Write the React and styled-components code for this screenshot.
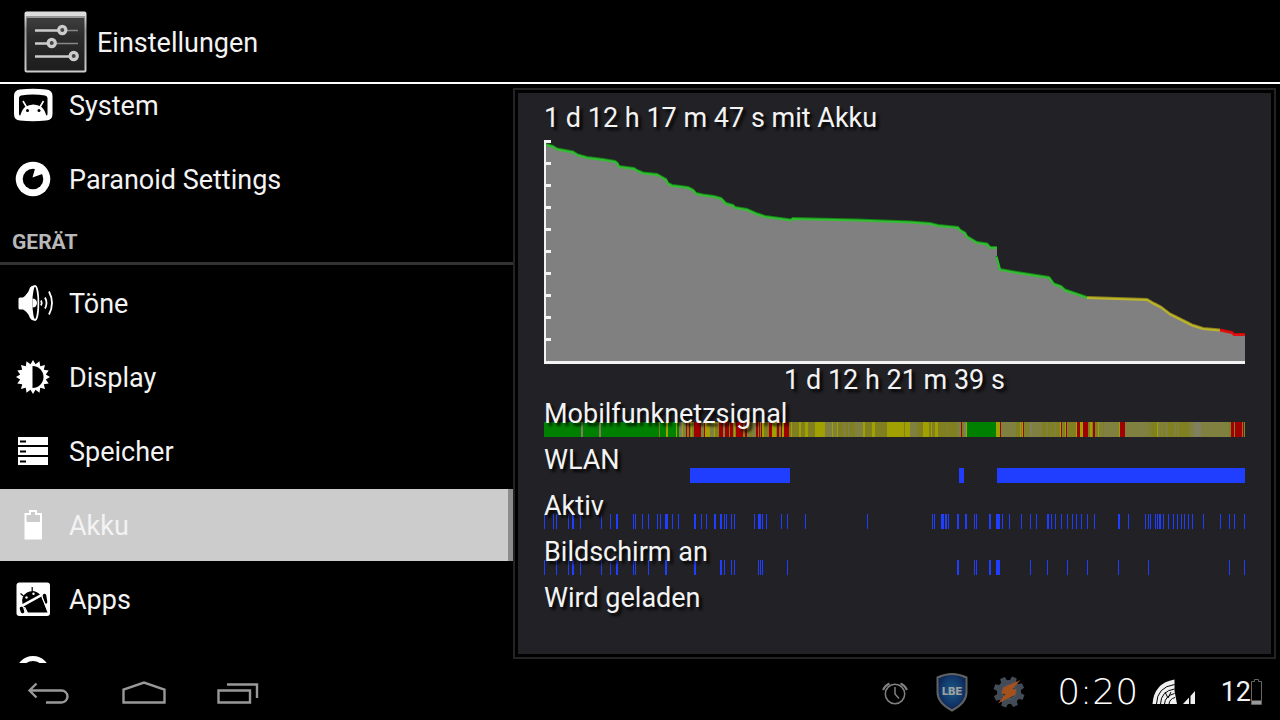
import React from 'react'
import styled, { createGlobalStyle } from 'styled-components'

const GlobalStyle = createGlobalStyle`
  * {
    box-sizing: border-box;
  }

  body {
    background: #000;
    color: #f3f3f3;
    font-family: Roboto, 'Noto Sans', sans-serif;
    font-size: 27px;
    line-height: 32px;
    margin: 0;
  }

  svg {
    display: block;
    flex-shrink: 0;
  }
`

const Page = styled.div`
  display: flex;
  flex-direction: column;
  height: 100vh;
  overflow: hidden;
`

const Header = styled.header`
  align-items: center;
  border-bottom: 2px solid #fff;
  display: flex;
  flex-shrink: 0;
  gap: 9px;
  height: 84px;
  padding: 2px 24px 0;
`

const Title = styled.h1`
  font-size: 27px;
  font-weight: 400;
  margin: 0;
  padding-top: 2px;
`

const Main = styled.main`
  display: flex;
  flex: 1;
  min-height: 0;
`

const Sidebar = styled.nav`
  flex: 0 0 calc(40% + 1px);
  overflow: hidden;
`

/* the list is scrolled a little, the first row slides under the header */
const List = styled.div`
  display: flex;
  flex-direction: column;
  gap: 2px;
  margin-top: -15px;
`

const Row = styled.button`
  align-items: center;
  background: ${props => (props.$selected ? '#ccc' : 'transparent')};
  border: 0;
  border-right: 5px solid ${props => (props.$selected ? '#8c8c8c' : 'transparent')};
  color: inherit;
  display: flex;
  flex-shrink: 0;
  font: inherit;
  gap: 12px;
  height: 72px;
  padding: 0 9px;
  text-align: left;
`

const RowLabel = styled.span`
  padding-top: 2px;
`

const Category = styled.h2`
  border-bottom: 3px solid #333;
  color: #b8b8b8;
  font-size: 21px;
  font-weight: 700;
  height: 48px;
  line-height: 50px;
  margin: 0;
  padding: 0 12px;
`

const Frame = styled.section`
  border: 2px solid #242424;
  display: flex;
  flex: 1;
  margin: 4px 4px 4px 0;
  min-width: 0;
  padding: 3px;
`

const Panel = styled.div`
  background: #222226;
  flex: 1;
  min-width: 0;
  padding: 9px 26px;
  text-shadow: 3px 3px 3px rgba(0, 0, 0, 0.9);
`

const PanelTitle = styled.h2`
  font-size: 27px;
  font-weight: 400;
  margin: 0 0 6px;
`

const ChartSvg = styled.svg`
  height: 224px;
  width: 100%;
`

const Duration = styled.div`
  margin-bottom: 2px;
  text-align: center;
`

const TimelineRow = styled.div`
  display: grid;
  grid-template-columns: minmax(0, 1fr);
  height: 46px;
  padding-bottom: 7px;
`

const TimelineLabel = styled.span`
  grid-area: 1 / 1;
  z-index: 1;
`

const TimelineSvg = styled.svg`
  align-self: end;
  grid-area: 1 / 1;
  height: 15px;
  width: 100%;
`

const SystemBar = styled.footer`
  align-items: center;
  display: flex;
  flex-shrink: 0;
  height: 57px;
  justify-content: space-between;
  padding: 0 18px 0 24px;
`

const NavKeys = styled.div`
  display: flex;
  gap: 47px;
`

const NavKey = styled.button`
  background: none;
  border: 0;
  padding: 0;
`

const Status = styled.div`
  align-items: center;
  display: flex;
  gap: 25px;
`

const StatusGroup = styled.div`
  align-items: center;
  display: flex;
  gap: ${props => props.$gap || 0}px;
`

const Clock = styled.time`
  color: #fff;
  font-family: 'DejaVu Sans', sans-serif;
  font-size: 36px;
  font-weight: 200;
  min-width: 96px;
  text-align: center;
`

const sunPoints = Array.from({ length: 32 }, (_, i) => {
  const r = i % 2 ? 13 : 17
  const a = (i * Math.PI) / 16 - Math.PI / 2
  return `${(24 + r * Math.cos(a)).toFixed(1)},${(24 + r * Math.sin(a)).toFixed(1)}`
}).join(' ')

const icons = {
  system: (
    <>
      <path fill="#fff" d="M11 8.5Q24 7 37 8.5Q43.500 9 43.500 15V33Q43.500 39 37 39.500Q24 41 11 39.500Q5 39 5 33V15Q5 9 11 8.500Z" />
      <path fill="#000" d="M12 14.500Q24 12.500 36 14.500Q38.500 15 38.500 17V33Q38.500 34.500 37 34.500H11.500Q10 34.500 10 33V17Q10 15 12 14.500Z" />
      <path fill="#fff" d="M11 36Q12.500 29 16 26Q20 23.500 24.300 23.500Q29 23.500 32.500 26Q36 29 37.700 36Z" />
      <path stroke="#fff" strokeWidth="1.6" d="M17.500 26L14 20M31 26L34.500 20" />
      <circle cx="18.500" cy="29.500" r="1.500" />
      <circle cx="30" cy="29.500" r="1.500" />
    </>
  ),
  paranoid: (
    <>
      <circle cx="24" cy="24" r="17.300" fill="#fff" />
      <circle cx="24" cy="24" r="10.300" />
      <path fill="#fff" d="M23.500 22.500L26.500 12L34 12L36 18Z" />
    </>
  ),
  sound: (
    <>
      <path fill="#fff" d="M11 18.500H14Q19 15 21 8.500Q22.500 6.500 25 6.500H27V41.500H25Q22.500 41.500 21 39Q19 33 14 30.500H11Q9.500 30.500 9.500 29V20Q9.500 18.500 11 18.500Z" />
      <ellipse cx="26" cy="24" rx="3.400" ry="17" stroke="#fff" strokeWidth="1.600" />
      <path fill="#fff" d="M23.500 19.500A4.500 4.500 0 0 1 23.500 28.500Z" />
      <path fill="none" stroke="#fff" strokeWidth="1.800" d="M32 21.500Q33.500 24 32 26.500M36 18.500Q39 24 36 29.500M40 12.500Q46 24 40 35.500" />
    </>
  ),
  display: (
    <>
      <polygon fill="#fff" points={sunPoints} />
      <path d="M23.500 13A11 11 0 0 1 23.500 35Z" />
    </>
  ),
  storage: (
    <>
      <path fill="#fff" d="M9 10H39V18H9ZM9 20H39V28H9ZM9 30H39V38H9Z" />
      <path d="M11 13.500H17V15.500H11ZM11 23.500H17V25.500H11ZM11 33.500H17V35.500H11Z" />
    </>
  ),
  battery: (
    <path
      fill="#fff"
      fillRule="evenodd"
      d="M20 9H28V12H33V38.500H15.500V12H20ZM22 11V14H17.500V21H31V14H26V11Z"
    />
  ),
  apps: (
    <>
      <rect x="7.500" y="7.500" width="33.500" height="33.500" rx="3" fill="#fff" />
      <path d="M13.500 29Q11.500 21.500 18 17.500Q25 13.500 31 19.500ZM14.500 31.500L32.500 21.500L38.500 37.500H18Z" />
      <path fill="none" stroke="#000" strokeWidth="1.200" d="M23.200 16V12M14.500 21L11.500 18.500" />
      <path stroke="#000" strokeWidth="3.600" strokeLinecap="round" d="M35.500 20.500L36.500 27M12.500 33.500L13.500 36.500" />
      <path stroke="#fff" strokeWidth="1.200" d="M33 22L39 36M15.500 32L18.500 38" />
      <circle cx="17.500" cy="22.500" r="1.200" fill="#fff" />
      <circle cx="24.500" cy="18.800" r="1.200" fill="#fff" />
    </>
  ),
  advanced: <circle cx="24" cy="24" r="14.500" stroke="#fff" strokeWidth="5" />,
}

const Icon = ({ name }) => (
  <svg width="48" height="48" viewBox="0 0 48 48" aria-hidden="true">
    {icons[name]}
  </svg>
)

const SettingsIcon = () => (
  <svg width="64" height="62" viewBox="0 0 64 62" aria-hidden="true">
    <defs>
      <linearGradient id="plate" x1="0" y1="0" x2="0" y2="1">
        <stop offset="0" stopColor="#444" />
        <stop offset="0.4" stopColor="#2c2c2c" />
        <stop offset="1" stopColor="#1c1c1c" />
      </linearGradient>
      <linearGradient id="rim" x1="0" y1="0" x2="0" y2="1">
        <stop offset="0" stopColor="#e6e6e6" />
        <stop offset="0.3" stopColor="#999" />
        <stop offset="1" stopColor="#ccc" />
      </linearGradient>
    </defs>
    <rect x="1.500" y="1.500" width="60" height="59" rx="1" fill="url(#plate)" stroke="url(#rim)" strokeWidth="2" />
    <path stroke="#ddd" strokeWidth="4" d="M1 3H62" />
    <path stroke="#999" strokeWidth="2" d="M2 6H61" />
    <path stroke="#ccc" strokeWidth="2.600" d="M11 19.500H36M11 32.500H25M11 45.500H47" />
    <path stroke="#888" strokeWidth="1.400" d="M40 19.500H54M30 32.500H54" />
    <g fill="#444" stroke="#ccc" strokeWidth="3.200">
      <circle cx="38.300" cy="19" r="3.600" />
      <circle cx="27.700" cy="32" r="3.600" />
      <circle cx="49.700" cy="45" r="3.600" />
    </g>
  </svg>
)

const greenLine =
  '2,5 9,7 13,9.5 29,12.500 34,15.500 43,18 59,20 71,22 73.500,24 75,27 90,29 93,31 99,33.500 113,35 122,40 124,44 128,46 144,48 149,50.500 152,54 159,55.500 170,57 177,59 182,64 189,66 191,68 203,70 212,74 221,77 247.500,80.500 248.500,79 313,80.500 366,82.500 386,84 394,86 414,88 416,90.500 421,93.500 423,97 433,103 443,104.500 446,108 453,108'
const greenLine2 = '452.500,117 456,130 473,133 505,138 510,144.500 517,147 521,150.500 533,154.500 543,158'
const yellowLine = '543,158 603,160 610,164 617,167.500 626,174.500 648,185.500 659,189 676,190.500'
const redLine = '676,190.500 688,193 690,195 701,195'

const levels = [
  { points: greenLine, color: '#35bb35', shade: '#128a12' },
  { points: greenLine2, color: '#35bb35', shade: '#128a12' },
  { points: yellowLine, color: '#bcb42c', shade: '#8c8418' },
  { points: redLine, color: '#e01010', shade: '#c00808' },
]

const BatteryChart = () => (
  <ChartSvg viewBox="0 0 701 224" preserveAspectRatio="none" role="img" aria-label="Akkuverlauf">
    <polygon fill="#808080" points={`2,222 ${greenLine} 453,117 ${greenLine2} ${yellowLine} ${redLine} 701,222`} />
    {levels.map(({ points, color, shade }) => (
      <g key={points} fill="none" strokeWidth="2">
        <polyline points={points} stroke={shade} transform="translate(0 -1)" />
        <polyline points={points} stroke={color} />
      </g>
    ))}
    <path stroke="#f3f3f3" strokeWidth="2" d="M1 0V223" />
    <path stroke="#f3f3f3" strokeWidth="3" d="M0 222.500H701" />
    {Array.from({ length: 10 }, (_, i) => (
      <rect key={i} x="2" y={i * 22} width="5" height="3" fill="#f3f3f3" />
    ))}
  </ChartSvg>
)

const GREEN = '#008000'
const RED = '#a00000'
const YELLOW = '#a0a000'
const OLIVE = '#808020'
const MOSS = '#808040'
const STONE = '#808060'

// [start, width] pairs, painted in this order
const signal = [
  [GREEN, [[0, 135], [423, 29]]],
  [OLIVE, [[135, 288]]],
  [MOSS, [[135, 7], [157, 3], [166, 4], [179, 2], [203, 3], [208, 4], [281, 12], [299, 3], [311, 8], [366, 7], [403, 1], [413, 4], [457, 244]]],
  [STONE, [[37, 2], [55, 2], [136, 2], [304, 1], [420, 2], [486, 2], [650, 7]]],
  [OLIVE, [[115, 1], [472, 6], [481, 2], [484, 1], [498, 4], [504, 3], [508, 2], [512, 4], [519, 2], [524, 8], [544, 5], [551, 3], [559, 1], [605, 1], [607, 6], [616, 1], [619, 2], [624, 6], [632, 1], [635, 10], [685, 2], [690, 1], [698, 1]]],
  [YELLOW, [[122, 2], [132, 1], [138, 1], [147, 1], [161, 5], [170, 1], [190, 1], [218, 2], [228, 4], [238, 2], [247, 1], [255, 2], [261, 3], [271, 10], [288, 1], [293, 1], [319, 2], [328, 3], [343, 17], [361, 5], [379, 6], [387, 1], [391, 3], [422, 1], [452, 4], [476, 1], [478, 1], [516, 1], [521, 1], [532, 1], [536, 3], [546, 2], [554, 1], [575, 1], [613, 1]]],
  [RED, [[142, 1], [145, 1], [150, 7], [160, 1], [175, 4], [181, 4], [186, 3], [192, 7], [201, 2], [212, 2], [215, 1], [217, 1], [225, 3], [233, 2], [237, 1], [240, 5], [417, 1], [456, 1], [479, 1], [517, 1], [522, 1], [533, 3], [539, 5], [549, 2], [576, 5], [687, 3], [691, 7], [699, 1]]],
]

const BLUE = '#203eff'
const ticks = list => [[BLUE, list.map(item => (Array.isArray(item) ? item : [item, 1]))]]

const timelines = [
  { label: 'Mobilfunknetzsignal', layers: signal },
  { label: 'WLAN', layers: ticks([[146, 100], [415, 5], [453, 248]]) },
  {
    label: 'Aktiv',
    layers: ticks([
      0, 9, 12, 24, [28, 2], 36, 57, 66, [72, 2], 89, 91, 98, 104, 113, 116, [121, 3], 128, 134, [150, 2], 157, 162,
      [170, 2], [176, 2], 180, 182, 187, 190, 210, [214, 3], 218, 222, 237, 243, 261, 323, 388, 390, [397, 3],
      [401, 2], 404, [413, 2], [421, 2], 430, 432, [445, 2], [452, 4], 458, 465, 477, 486, 492, [503, 2], 507, 511,
      517, 523, 528, 532, 537, 543, 550, [574, 2], 584, 601, 604, 606, 611, 613, [615, 2], 619, 624, 629, 633, 637,
      640, 644, 648, 659, 676, 685, 690, 700,
    ]),
  },
  {
    label: 'Bildschirm an',
    layers: ticks([
      0, 12, 24, [28, 2], 36, 57, 66, [72, 2], 89, 91, 104, [121, 2], [150, 2], [176, 2], 180, 187, 190, 214, 216,
      218, 243, [413, 2], 430, 432, [445, 2], [452, 4], 486, 503, 523, 543, 574, 604, 685, 700,
    ]),
  },
  { label: 'Wird geladen', layers: [] },
]

const Timeline = ({ label, layers }) => (
  <TimelineRow>
    <TimelineLabel>{label}</TimelineLabel>
    <TimelineSvg viewBox="0 0 701 15" preserveAspectRatio="none" shapeRendering="crispEdges" aria-hidden="true">
      {layers.map(([color, spans], i) => (
        <path key={i} fill={color} d={spans.map(([x, w]) => `M${x} 0h${w}v15h-${w}z`).join('')} />
      ))}
    </TimelineSvg>
  </TimelineRow>
)

const navKeys = [
  { label: 'Zurück', path: 'M12.500 7.500L5.500 14.500L12.500 21.500M5.500 14.500H37.500A6 6 0 0 1 37.500 26.500H22' },
  { label: 'Startseite', path: 'M4.500 26.500V13.500L25 6.500L45.500 13.500V26.500Z' },
  { label: 'Letzte Apps', path: 'M4.500 14.500H36V26.500H4.500ZM13 8.500H43V22' },
]

const AlarmIcon = () => (
  <svg width="30" height="32" viewBox="0 0 30 32" fill="none" stroke="#808080" strokeWidth="1.500" aria-hidden="true">
    <circle cx="14" cy="18" r="9.700" />
    <path d="M14 11V18L18 22.500" />
    <path strokeWidth="2" d="M2 14Q4 9.500 8.500 7.500M19.500 7.500Q24 9.500 26 14" />
  </svg>
)

const ShieldIcon = () => (
  <svg width="32" height="40" viewBox="0 0 32 40" aria-label="LBE" role="img">
    <defs>
      <radialGradient id="shield" cx="0.5" cy="0.45" r="0.6">
        <stop offset="0" stopColor="#185a80" />
        <stop offset="0.6" stopColor="#12386c" />
        <stop offset="1" stopColor="#0c1c44" />
      </radialGradient>
    </defs>
    <path
      fill="url(#shield)"
      stroke="#626262"
      strokeWidth="2"
      d="M16 2Q23 2 30.500 5.500V20Q30.500 31 16 38.500Q1.500 31 1.500 20V5.500Q9 2 16 2Z"
    />
    <text x="16" y="23" fill="#a0a0a0" fontFamily="Inter, sans-serif" fontSize="11" fontWeight="800" textAnchor="middle">
      LBE
    </text>
  </svg>
)

const GearIcon = () => (
  <svg width="32" height="32" viewBox="0 0 32 32" aria-hidden="true">
    <g fill="#434b57">
      {[0, 45, 90, 135].map(angle => (
        <path key={angle} d="M13.500 0.500H18.500L19.500 6V26L18.500 31.500H13.500L12.500 26V6Z" transform={`rotate(${angle + 20} 16 16)`} />
      ))}
      <circle cx="16" cy="16" r="12" />
    </g>
    <circle cx="16" cy="16" r="7" fill="#2c333d" stroke="#57606c" />
    <path fill="#a4511c" d="M27.500 4L10.500 11.500L8.500 17.500L12.500 18L5 27.500L22 19L23.500 13.500L19.500 13Z" />
  </svg>
)

const SignalIcon = () => (
  <svg width="44" height="26" viewBox="0 0 44 26" aria-hidden="true">
    <path fill="#f0f0f0" d="M0.500 25Q2 4 22.500 0.500V12L25 25Z" />
    <path fill="none" stroke="#000" strokeWidth="1" d="M4.500 25Q5 8 22.500 5.500M8.500 25Q9 12 22.500 10M12.500 25Q13 17 22.500 14.500M17 25Q17.500 20 23 18.500M13 13L16 19L19 13" />
    <path fill="#f0f0f0" d="M31 25L37 18.500V25ZM38.500 17L43 12V25H38.500Z" />
  </svg>
)

const BatteryIcon = () => (
  <svg width="11" height="26" viewBox="0 0 11 26" aria-hidden="true">
    <path fill="none" stroke="#666" d="M3.500 0.500H7.500V2.500H10.500V25.500H0.500V2.500H3.500Z" />
    <path fill="#999" d="M1 21.500H10V25H1Z" />
  </svg>
)

const Item = ({ icon, label, selected }) => (
  <Row type="button" $selected={selected} aria-current={selected ? 'page' : undefined}>
    <Icon name={icon} />
    <RowLabel>{label}</RowLabel>
  </Row>
)

const App = () => (
  <>
    <GlobalStyle />
    <Page>
      <Header>
        <SettingsIcon />
        <Title>Einstellungen</Title>
      </Header>
      <Main>
        <Sidebar>
          <List>
            <Item icon="system" label="System" />
            <Item icon="paranoid" label="Paranoid Settings" />
            <Category>GERÄT</Category>
            <Item icon="sound" label="Töne" />
            <Item icon="display" label="Display" />
            <Item icon="storage" label="Speicher" />
            <Item icon="battery" label="Akku" selected />
            <Item icon="apps" label="Apps" />
            <Item icon="advanced" label="Erweitert" />
          </List>
        </Sidebar>
        <Frame>
          <Panel>
            <PanelTitle>1 d 12 h 17 m 47 s mit Akku</PanelTitle>
            <BatteryChart />
            <Duration>1 d 12 h 21 m 39 s</Duration>
            {timelines.map(timeline => (
              <Timeline key={timeline.label} {...timeline} />
            ))}
          </Panel>
        </Frame>
      </Main>
      <SystemBar>
        <NavKeys>
          {navKeys.map(({ label, path }) => (
            <NavKey key={label} type="button" aria-label={label}>
              <svg width="48" height="32" viewBox="0 0 48 32" fill="none" stroke="#999" strokeWidth="2.400">
                <path d={path} />
              </svg>
            </NavKey>
          ))}
        </NavKeys>
        <Status>
          <AlarmIcon />
          <ShieldIcon />
          <GearIcon />
          <StatusGroup $gap={6}>
            <Clock>0:20</Clock>
            <SignalIcon />
          </StatusGroup>
          <StatusGroup>
            12
            <BatteryIcon />
          </StatusGroup>
        </Status>
      </SystemBar>
    </Page>
  </>
)

export default App
